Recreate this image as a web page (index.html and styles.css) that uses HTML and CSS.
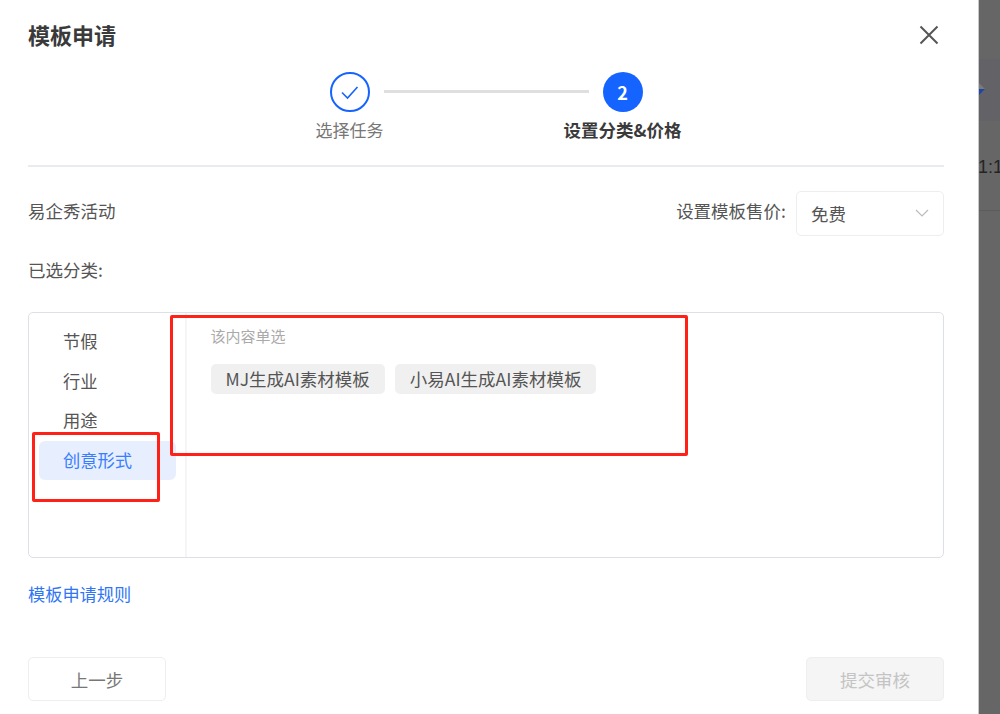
FILE: index.html
```html
<!DOCTYPE html>
<html lang="zh-CN">
<head>
<meta charset="utf-8">
<title>模板申请</title>
<link rel="stylesheet" href="styles.css">
</head>
<body>
<div class="backdrop">
  <div class="bg-header"><span class="bg-caret-up"></span><span class="bg-caret-down"></span></div>
  <div class="bg-row"><span class="bg-text">1:1</span></div>
</div>
<main class="dialog">
  <header class="head">
    <h1 class="title">模板申请</h1>
    <button class="close" aria-label="关闭">
      <svg width="20" height="20" viewBox="0 0 20 20"><path d="M1.5 1.5 18.5 18.5M18.5 1.5 1.5 18.5" stroke="#555" stroke-width="2" fill="none"/></svg>
    </button>
  </header>
  <section class="steps">
    <div class="step">
      <span class="dot dot-done">
        <svg width="20" height="20" viewBox="0 0 20 20"><path d="M2 10.5 7.5 16 17.5 5" stroke="#1664ff" stroke-width="1.6" fill="none"/></svg>
      </span>
      <span class="step-label">选择任务</span>
    </div>
    <span class="connector"></span>
    <div class="step">
      <span class="dot dot-active">2</span>
      <span class="step-label step-label-active">设置分类&amp;价格</span>
    </div>
  </section>
  <section class="meta">
    <span class="meta-text">易企秀活动</span>
    <div class="price">
      <span class="meta-text">设置模板售价:</span>
      <div class="select">
        <span>免费</span>
        <svg width="14" height="8" viewBox="0 0 14 8"><path d="M1 1 7 7 13 1" stroke="#bbb" stroke-width="1.2" fill="none"/></svg>
      </div>
    </div>
  </section>
  <p class="selected">已选分类:</p>
  <section class="panel">
    <nav class="cats">
      <a class="cat">节假</a>
      <a class="cat">行业</a>
      <a class="cat">用途</a>
      <a class="cat cat-active">创意形式</a>
    </nav>
    <div class="options">
      <p class="hint">该内容单选</p>
      <div class="tags">
        <span class="tag">MJ生成AI素材模板</span>
        <span class="tag">小易AI生成AI素材模板</span>
      </div>
    </div>
    <div class="mark mark-cat"></div>
    <div class="mark mark-opt"></div>
  </section>
  <a class="rules">模板申请规则</a>
  <footer class="foot">
    <button class="btn">上一步</button>
    <button class="btn btn-disabled">提交审核</button>
  </footer>
</main>
</body>
</html>
```
FILE: styles.css
```css
* { box-sizing: border-box; }
html, body { margin: 0; height: 714px; overflow: hidden; }
body {
  position: relative;
  background: #666;
  font-family: "Noto Sans CJK SC", "Liberation Sans", sans-serif;
  color: #555;
}
.backdrop { position: absolute; top: 0; right: 0; width: 22px; height: 714px; padding-top: 59px; }
.bg-header { height: 62px; background: #636367; padding-top: 24px; display: flex; flex-direction: column; }
.bg-caret-up { width: 0; height: 0; margin-left: -5px; border: 6px solid transparent; border-top-width: 0; border-bottom: 6px solid #7a7a7a; }
.bg-caret-down { width: 0; height: 0; margin-left: -5px; border: 6px solid transparent; border-bottom-width: 0; border-top: 6px solid #1d46a8; }
.bg-row { height: 90px; border-bottom: 1px solid #5c5c5c; display: flex; align-items: center; padding-top: 4px; }
.bg-text { font: 18px "Liberation Sans", sans-serif; color: #242424; }
.dialog {
  position: absolute;
  left: 0; top: 0;
  width: 979px;
  height: 714px;
  background: #fff;
  border-right: 1px solid #c8c8c8;
  padding: 0 34px 0 28px;
}
.head { display: flex; justify-content: space-between; align-items: center; height: 72px; padding-bottom: 2px; }
.title { margin: 0 0 2px; font-size: 22px; line-height: 30px; font-weight: 700; color: #3a3a3a; }
.close { border: 0; background: none; padding: 0; width: 20px; height: 20px; margin-right: 5px; display: block; }
.close svg { display: block; }
.steps { display: flex; justify-content: center; align-items: flex-start; height: 95px; border-bottom: 2px solid #e8ecf0; }
.step { width: 40px; display: flex; flex-direction: column; align-items: center; }
.dot { width: 40px; height: 40px; border-radius: 50%; flex: none; display: flex; align-items: center; justify-content: center; }
.dot-done { border: 2px solid #1664ff; }
.dot-active { background: #1664ff; color: #fff; font-size: 18px; font-weight: 700; }
.step-label { margin-top: 6px; white-space: nowrap; font-size: 17px; line-height: 24px; color: #777; }
.step-label-active { font-size: 17.5px; font-weight: 700; color: #3a3a3a; }
.connector { width: 205px; height: 3px; margin: 18px 14px 0; background: #dfdfdf; }
.meta { display: flex; justify-content: space-between; align-items: center; height: 44px; margin-top: 24px; }
.meta-text { font-size: 17.5px; line-height: 24px; color: #555; position: relative; top: -2px; }
.price { display: flex; align-items: center; gap: 10px; }
.select {
  width: 148px; height: 45px; border: 1px solid #eee; border-radius: 5px;
  display: flex; align-items: center; justify-content: space-between;
  padding: 0 14px; font-size: 17.5px; color: #555;
}
.selected { margin: 23px 0 0; font-size: 17.5px; line-height: 24px; color: #555; }
.panel { position: relative; display: flex; height: 246px; margin-top: 30px; border: 1px solid #dde0e6; border-radius: 5px; }
.cats { width: 158px; flex: none; border-right: 2px solid #f5f5f7; padding: 9px 9px 0 10px; display: flex; flex-direction: column; }
.cat { height: 39.5px; border-radius: 6px; padding-left: 24px; font-size: 17.3px; line-height: 38px; color: #555; }
.cat-active { background: #e7effe; color: #3a7eff; }
.options { padding: 12px 23.5px; }
.hint { margin: 0; font-size: 15px; line-height: 22px; color: #aaa; }
.tags { display: flex; gap: 10px; margin-top: 17px; }
.tag { height: 30px; padding: 0 15px; border-radius: 5px; background: #f0f0f0; font-size: 17.5px; line-height: 30px; color: #555; white-space: nowrap; }
.mark { position: absolute; border: 3px solid #ff2018; border-radius: 2px; }
.mark-cat { left: 3px; top: 119px; width: 128px; height: 70px; }
.mark-opt { left: 141px; top: 2px; width: 518px; height: 141px; }
.rules { display: block; margin-top: 23px; font-size: 17.2px; line-height: 26px; color: #2f75f5; }
.foot { display: flex; justify-content: space-between; margin-top: 50px; }
.btn { width: 138px; height: 44px; border: 1px solid #eee; border-radius: 5px; background: #fff; font: 17.5px "Noto Sans CJK SC", sans-serif; color: #777; padding: 0; }
.btn-disabled { background: #f5f5f5; color: #c4c4c4; }
```
